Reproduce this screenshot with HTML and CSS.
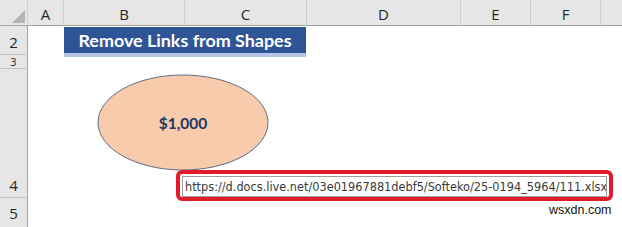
FILE: index.html
```html
<!DOCTYPE html>
<html>
<head>
<meta charset="utf-8">
<link rel="stylesheet" href="styles.css">
</head>
<body>
<div class="sheet">
  <div class="corner"><svg width="28" height="26" viewBox="0 0 28 26"><polygon points="25,10 25,23 12,23" fill="#b4b4b4"/></svg></div>
  <div class="ch">A</div>
  <div class="ch">B</div>
  <div class="ch">C</div>
  <div class="ch">D</div>
  <div class="ch">E</div>
  <div class="ch">F</div>
  <div class="ch last"></div>

  <div class="rh r2">2</div>
  <div class="rh r3">3</div>
  <div class="rh r4">4</div>
  <div class="rh r5">5</div>

  <div class="title">Remove Links from Shapes</div>

  <div class="shape">
    <svg class="shape-bg" width="172" height="97" viewBox="0 0 172 97"><ellipse cx="86" cy="48.5" rx="85" ry="47.5" fill="#f8cbad" stroke="#5f6b84" stroke-width="1"/></svg>
    <span class="shape-text">$1,000</span>
  </div>

  <div class="tip-frame">
    <div class="tip">https://d.docs.live.net/03e01967881debf5/Softeko/25-0194_5964/111.xlsx</div>
  </div>

  <div class="mark">wsxdn.com</div>
</div>
</body>
</html>
```
FILE: styles.css
```css
html, body {
  margin: 0;
  padding: 0;
  background: #ffffff;
}

.sheet {
  position: relative;
  width: 622px;
  height: 227px;
  overflow: hidden;
  display: grid;
  grid-template-columns: 28px 36px 121px 122px 154px 70px 70px 1fr;
  grid-template-rows: 26px 29px 14px 129px 1fr;
  font-family: "Open Sans", "Liberation Sans", sans-serif;
}

.corner {
  grid-column: 1;
  grid-row: 1;
  background: #e6e6e6;
  border-right: 1px solid #cfcfcf;
  border-bottom: 1px solid #a3a3a3;
  box-sizing: border-box;
  overflow: hidden;
}

.corner svg {
  display: block;
}

.ch {
  grid-row: 1;
  background: #e6e6e6;
  border-right: 1px solid #cdcdcd;
  border-bottom: 1px solid #a3a3a3;
  box-sizing: border-box;
  display: flex;
  align-items: center;
  justify-content: center;
  padding-top: 3px;
  font-size: 15px;
  color: #262626;
  font-family: "Open Sans", "Liberation Sans", sans-serif;
}

.ch.last {
  border-right: none;
}

.rh {
  grid-column: 1;
  background: #e6e6e6;
  border-right: 1px solid #a3a3a3;
  border-bottom: 1px solid #c4c4c4;
  box-sizing: border-box;
  display: flex;
  align-items: flex-end;
  justify-content: center;
  padding-bottom: 3px;
  font-size: 15px;
  line-height: 18px;
  color: #262626;
  overflow: hidden;
}

.r2 { grid-row: 2; }
.r4 { grid-row: 4; }
.r5 { grid-row: 5; border-bottom: none; align-items: flex-start; padding-top: 6px; padding-bottom: 0; }

.r3 {
  grid-row: 3;
  display: block;
  text-align: center;
  padding: 0;
  font-size: 11px;
  line-height: 13px;
}

.title {
  grid-column: 3 / 5;
  grid-row: 2;
  align-self: start;
  margin-top: 1px;
  margin-right: 1px;
  height: 26px;
  background: #2f5597;
  border-bottom: 4px solid #b4c6e7;
  color: #ffffff;
  font-family: "Lato", "Open Sans", sans-serif;
  font-weight: 700;
  font-size: 17.9px;
  display: flex;
  align-items: center;
  justify-content: center;
  position: relative;
  z-index: 1;
}

.shape {
  position: absolute;
  left: 97px;
  top: 74px;
  width: 172px;
  height: 97px;
  display: flex;
  align-items: center;
  justify-content: center;
}

.shape-bg {
  position: absolute;
  left: 0;
  top: 0;
}

.shape-text {
  position: relative;
  font-family: "Lato", "Open Sans", sans-serif;
  font-weight: 700;
  font-size: 15.5px;
  color: #203864;
}

.tip-frame {
  position: absolute;
  left: 176px;
  top: 170px;
  width: 437px;
  height: 31px;
  box-sizing: border-box;
  border: 4px solid #e11b2c;
  border-radius: 6px;
  background: #ffffff;
  padding: 2px;
}

.tip {
  box-sizing: border-box;
  width: 425px;
  height: 21px;
  border: 1px solid #9d9d9d;
  background: #ffffff;
  font-family: "DejaVu Sans Condensed", "DejaVu Sans", sans-serif;
  font-size: 12.6px;
  line-height: 19px;
  color: #3a3a3a;
  padding-left: 2px;
  white-space: nowrap;
  overflow: hidden;
}

.mark {
  position: absolute;
  left: 549px;
  top: 203px;
  font-family: "Liberation Sans", Arial, sans-serif;
  font-size: 12.5px;
  color: #111111;
}
```
